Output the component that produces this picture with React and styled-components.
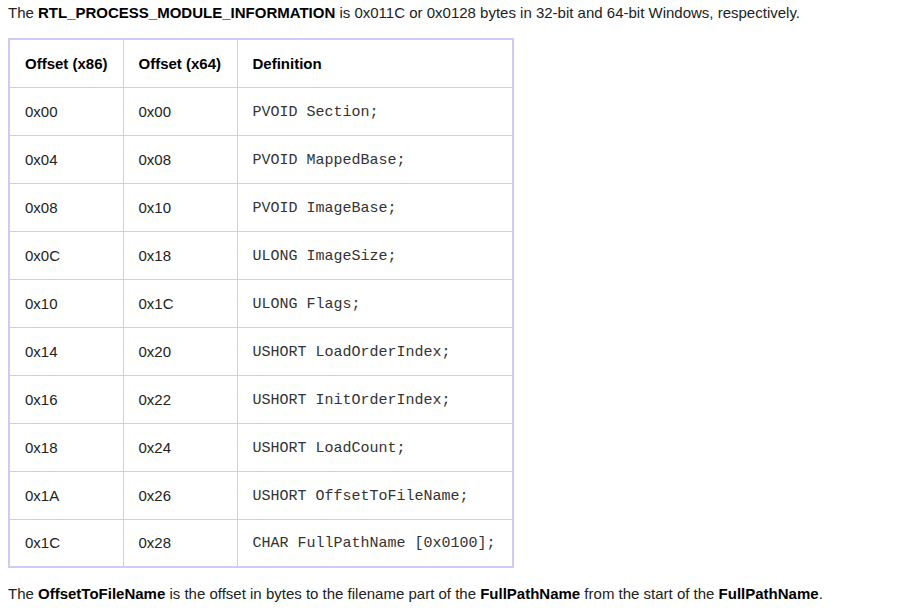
import React from 'react'
import styled, { createGlobalStyle } from 'styled-components'

const GlobalStyle = createGlobalStyle`
  body {
    margin: 0 8px;
    background: #fff;
    font-family: "Liberation Sans", Arial, sans-serif;
    font-size: 15px;
    color: #222;
  }
`;

const rows = [
  ['0x00', '0x00', 'PVOID Section;'],
  ['0x04', '0x08', 'PVOID MappedBase;'],
  ['0x08', '0x10', 'PVOID ImageBase;'],
  ['0x0C', '0x18', 'ULONG ImageSize;'],
  ['0x10', '0x1C', 'ULONG Flags;'],
  ['0x14', '0x20', 'USHORT LoadOrderIndex;'],
  ['0x16', '0x22', 'USHORT InitOrderIndex;'],
  ['0x18', '0x24', 'USHORT LoadCount;'],
  ['0x1A', '0x26', 'USHORT OffsetToFileName;'],
  ['0x1C', '0x28', 'CHAR FullPathName [0x0100];'],
];

const App = () => {
  return (
    <>
      <GlobalStyle />
      <Para top>
        The <b>RTL_PROCESS_MODULE_INFORMATION</b> is 0x011C or 0x0128 bytes in 32-bit and 64-bit Windows, respectively.
      </Para>
      <Tabla>
        <colgroup>
          <col style={{ width: 114 }} />
          <col style={{ width: 114 }} />
          <col />
        </colgroup>
        <thead>
          <tr>
            <Th>Offset (x86)</Th>
            <Th>Offset (x64)</Th>
            <Th>Definition</Th>
          </tr>
        </thead>
        <tbody>
          {rows.map(r => (
            <tr key={r[0]}>
              <Td>{r[0]}</Td>
              <Td>{r[1]}</Td>
              <Td><Code>{r[2]}</Code></Td>
            </tr>
          ))}
        </tbody>
      </Tabla>
      <Para>
        The <b>OffsetToFileName</b> is the offset in bytes to the filename part of the <b>FullPathName</b> from the start of the <b>FullPathName</b>.
      </Para>
    </>
  );
};

export default App;

const Para = styled.p`
  margin: ${p => (p.top ? '4px 0 16px' : '17px 0 0')};
  line-height: 18px;
  b {
    color: #000;
  }
`;

const Tabla = styled.table`
  border-collapse: collapse;
  border: 2px solid #ccccf6;
  width: 506px;
  table-layout: fixed;
`;

const Th = styled.th`
  border: 1px solid #ccccf6;
  height: 48px;
  padding: 0 15px;
  text-align: left;
  font-weight: 700;
  color: #000;
  white-space: nowrap;
  box-sizing: border-box;
`;

const Td = styled.td`
  border: 1px solid #ccccf6;
  height: 48px;
  padding: 0 15px;
  text-align: left;
  white-space: nowrap;
  box-sizing: border-box;
`;

const Code = styled.code`
  font-family: "Liberation Mono", "Courier New", monospace;
  font-size: 15px;
  color: #333;
`;
